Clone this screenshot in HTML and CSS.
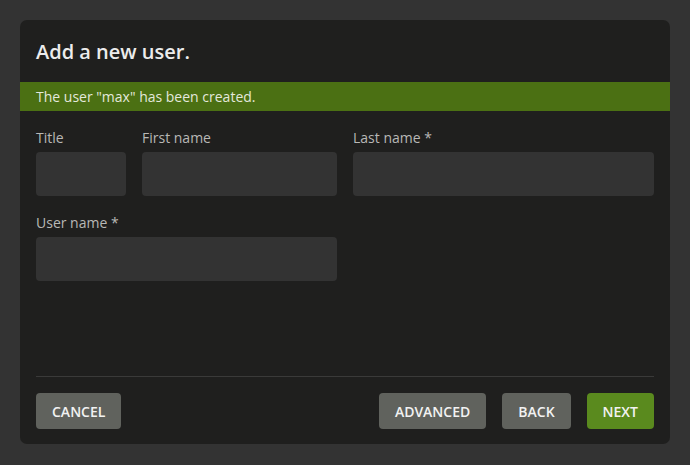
FILE: index.html
```html
<!DOCTYPE html>
<html>
<head>
<meta charset="utf-8">
<link rel="stylesheet" href="styles.css">
</head>
<body>
<div class="dialog">
  <h1 class="title">Add a new user.</h1>
  <div class="banner">The user "max" has been created.</div>
  <div class="form">
    <div class="field f-title">
      <label>Title</label>
      <div class="input"></div>
    </div>
    <div class="field f-first">
      <label>First name</label>
      <div class="input"></div>
    </div>
    <div class="field f-last">
      <label>Last name *</label>
      <div class="input"></div>
    </div>
    <div class="field f-user">
      <label>User name *</label>
      <div class="input"></div>
    </div>
  </div>
  <div class="footer">
    <button class="btn">CANCEL</button>
    <div class="spacer"></div>
    <button class="btn">ADVANCED</button>
    <button class="btn">BACK</button>
    <button class="btn primary">NEXT</button>
  </div>
</div>
</body>
</html>
```
FILE: styles.css
```css
* { box-sizing: border-box; }
html, body { margin: 0; padding: 0; }
body {
  background: #333333;
  font-family: "Open Sans", "Noto Sans", sans-serif;
  padding: 20px;
  height: 465px;
}
.dialog {
  background: #1f1f1e;
  border-radius: 7px;
  height: 424px;
  display: flex;
  flex-direction: column;
}
.title {
  margin: 0;
  height: 62px;
  padding: 0 16px;
  display: flex;
  align-items: center;
  font-size: 20px;
  font-weight: 600;
  color: #ececec;
}
.banner {
  background: #4b7013;
  color: #e3e8dc;
  font-size: 14px;
  height: 29px;
  line-height: 29px;
  padding: 0 16px;
}
.form {
  flex: 1;
  padding: 17px 16px 0;
  display: grid;
  grid-template-columns: 90px 195px 301px;
  column-gap: 16px;
  row-gap: 17px;
  align-content: start;
}
.field { display: flex; flex-direction: column; }
.f-user { grid-column: 1 / 3; }
.field label {
  font-size: 14px;
  line-height: 20px;
  color: #b8b8b6;
  margin-bottom: 4px;
}
.input {
  height: 44px;
  background: #333333;
  border-radius: 4px;
}
.footer {
  margin: 0 16px;
  border-top: 1px solid #3a3a39;
  padding: 16px 0 15px;
  display: flex;
  gap: 16px;
}
.spacer { flex: 1; }
.btn {
  height: 36px;
  border: none;
  border-radius: 4px;
  background: #60625d;
  color: #f2f2f2;
  font-family: "Open Sans", "Noto Sans", sans-serif;
  font-size: 14px;
  font-weight: 600;
  padding: 0 16px;
}
.btn.primary { background: #5a8a1e; }
```
